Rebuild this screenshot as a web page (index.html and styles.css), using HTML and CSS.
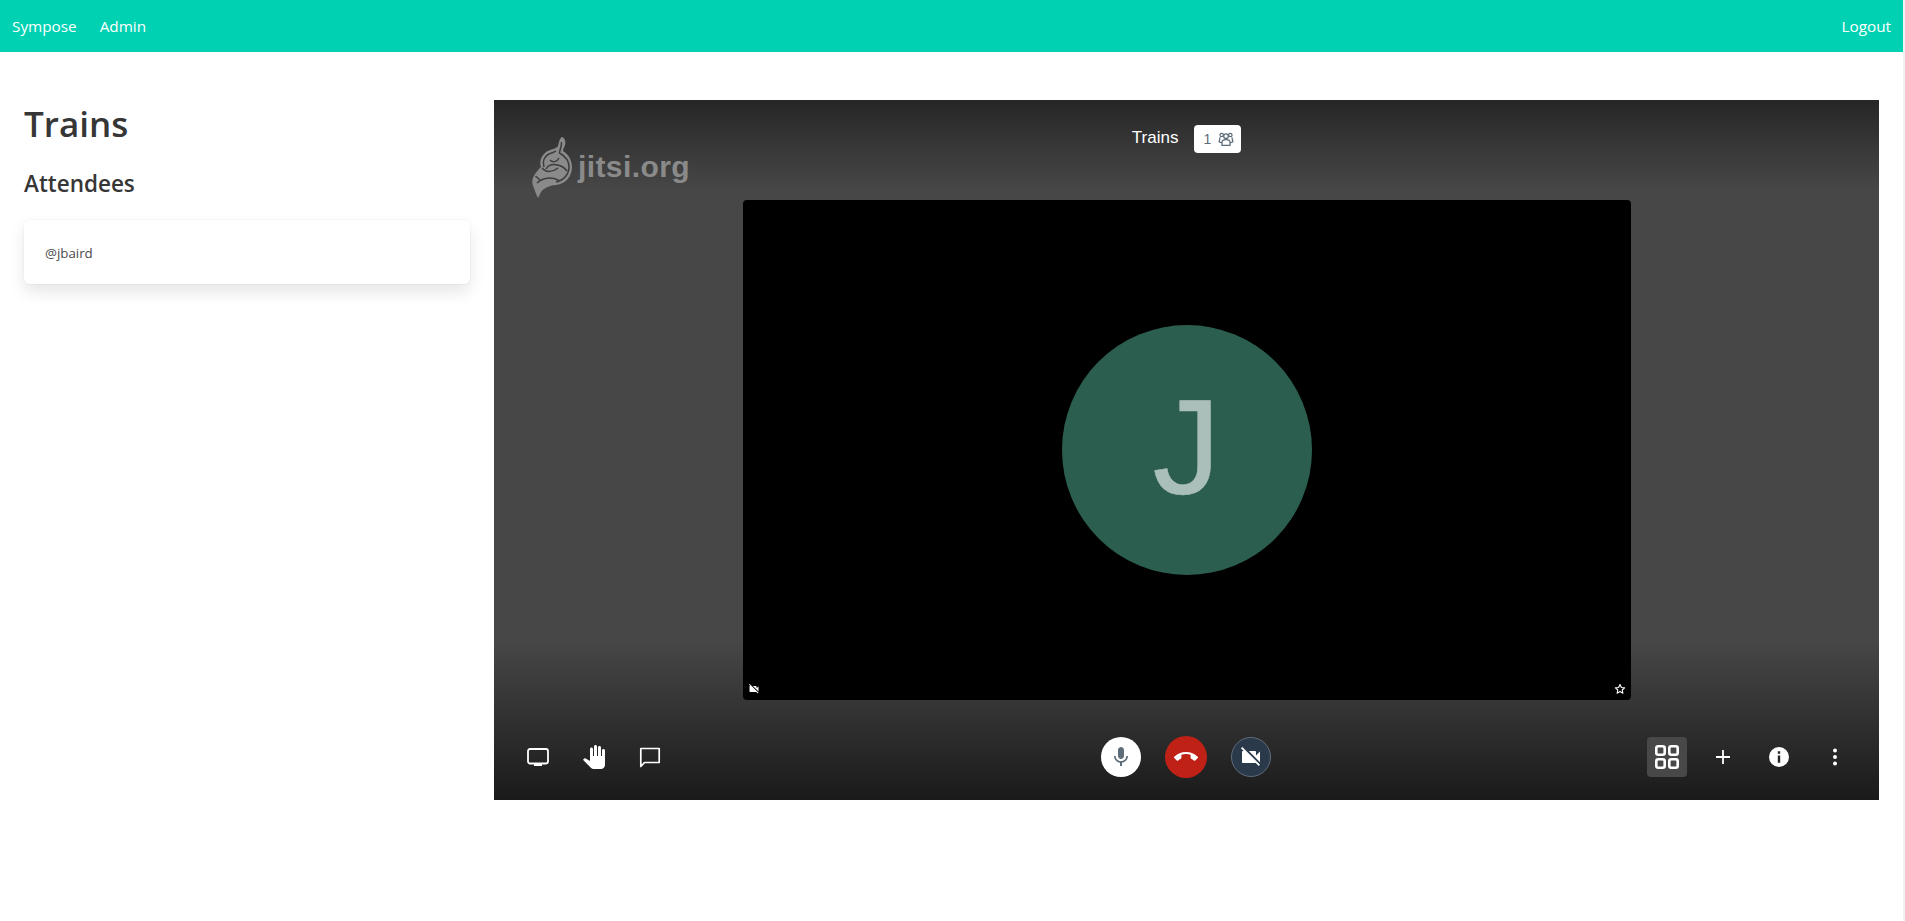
FILE: index.html
```html
<!DOCTYPE html>
<html>
<head>
    <meta charset="UTF-8">
    <meta name="viewport" content="width=device-width, initial-scale=1.0">
    <title>Trains</title>
    <link rel="stylesheet" href="styles.css">
</head>
<body>
    <nav class="navbar">
        <a href="#">Sympose</a>
        <a href="#">Admin</a>
        <a href="#" class="logout">Logout</a>
    </nav>
    <main class="columns">
        <section class="sidebar">
            <h1 class="title">Trains</h1>
            <h2 class="subtitle">Attendees</h2>
            <div class="card">@jbaird</div>
        </section>
        <section class="meeting">
            <div class="watermark">
                <svg class="watermark-logo" width="40" height="62" viewBox="0 0 40 62">
                    <path d="M30 1C33 2 34 6 33 9C32 12 31 13 31 15C36 18 40 24 40 31C40 40 34 48 24 49C17 49.500 12 52 9 56L6 62C4 58 3 55 2 52C0 48 -1 44 3 38C5 35 7 33 9 31C7 26 9 20 14 16C19 13 24 13 26 10C27 7 27 3 30 1Z" fill="#8a8a8a"/>
                    <path d="M29.500 6C30 10 27.500 14 27.500 17C33 20 37 25 37 31C37 38 32 44.500 24 46M12 31C10.500 26 12 21 16 18.500C19 17 22 16.500 24 15M14 33C18 26 30 28 35 35M10 32C14 37 21 36 26 32M5 47C11 41 20 41 27 44.500M8 44L3.500 40M18 24C21 27 25 26 27 22" fill="none" stroke="#3d3d3d" stroke-width="1.500"/>
                </svg>
                <span>jitsi.org</span>
            </div>
            <header class="meeting-head">
                <span class="meeting-name">Trains</span>
                <span class="count">
                    1
                    <svg width="16" height="16" viewBox="0 0 14 14" fill="none" stroke="#5e6d7a" stroke-width="1.100">
                        <circle cx="7" cy="4.500" r="2"/>
                        <circle cx="3.200" cy="3.500" r="1.500"/>
                        <circle cx="10.800" cy="3.500" r="1.500"/>
                        <path d="M3.500 12.500V9.500C3.500 8 5 7.500 7 7.500S10.500 8 10.500 9.500V12.500ZM1.800 5.500L1 9.500L3.500 10.500M12.200 5.500L13 9.500L10.500 10.500"/>
                    </svg>
                </span>
            </header>
            <div class="stage">
                <div class="tile">
                    <div class="avatar">J</div>
                    <div class="tile-status">
                        <svg width="12" height="12" viewBox="0 0 24 24" fill="#fff"><path d="M21 6.500l-4 4V7c0-.55-.45-1-1-1H9.820L21 17.180V6.500zM3.270 2L2 3.270 4.730 6H4c-.55 0-1 .45-1 1v10c0 .55.45 1 1 1h12c.21 0 .39-.08.54-.18L19.730 21 21 19.730 3.270 2z"/></svg>
                        <svg width="12" height="12" viewBox="0 0 24 24" fill="none" stroke="#fff" stroke-width="2.200" stroke-linejoin="round"><path d="M12 3l2.800 6 6.400.7-4.800 4.300 1.400 6.500L12 17.200 6.200 20.500l1.400-6.500-4.800-4.300 6.400-.7z"/></svg>
                    </div>
                </div>
            </div>
            <footer class="toolbar">
                <div class="tools">
                    <button class="tool">
                        <svg width="24" height="24" viewBox="0 0 24 24"><rect x="2" y="4" width="20" height="14.500" rx="2" fill="none" stroke="#fff" stroke-width="1.800"/><rect x="8" y="19" width="8" height="2" fill="#fff"/></svg>
                    </button>
                    <button class="tool">
                        <svg width="24" height="24" viewBox="0 0 24 24" fill="#fff"><path d="M23 5.500V20c0 2.200-1.800 4-4 4h-7.300c-1.080 0-2.100-.43-2.850-1.190L1 14.830s1.260-1.230 1.300-1.250c.22-.19.49-.29.79-.29.22 0 .42.06.6.16.04.01 4.310 2.460 4.310 2.460V4c0-.83.67-1.500 1.500-1.500S11 3.170 11 4v7h1V1.500c0-.83.67-1.500 1.500-1.500S15 .67 15 1.500V11h1V2.500c0-.83.67-1.500 1.500-1.500s1.500.67 1.500 1.500V11h1V5.500c0-.83.67-1.500 1.500-1.500s1.500.67 1.500 1.500z"/></svg>
                    </button>
                    <button class="tool">
                        <svg width="24" height="24" viewBox="0 0 24 24"><path d="M2.800 3.500H21.200V17.500H6.500L2.800 21.500Z" fill="none" stroke="#fff" stroke-width="1.700" stroke-linejoin="round"/></svg>
                    </button>
                </div>
                <div class="calls">
                    <button class="call call-mic">
                        <svg width="24" height="24" viewBox="0 0 24 24" fill="#5e6d7a"><path d="M12 14c1.660 0 2.990-1.340 2.990-3L15 5c0-1.660-1.340-3-3-3S9 3.340 9 5v6c0 1.660 1.340 3 3 3zm5.300-3c0 3-2.540 5.100-5.300 5.100S6.700 14 6.700 11H5c0 3.410 2.720 6.230 6 6.720V21h2v-3.280c3.280-.48 6-3.300 6-6.720h-1.700z"/></svg>
                    </button>
                    <button class="call call-end">
                        <svg width="24" height="24" viewBox="0 0 24 24" fill="#fff"><path d="M12 9c-1.600 0-3.150.25-4.600.72v3.100c0 .39-.23.74-.56.9-.98.49-1.870 1.120-2.660 1.850-.18.18-.43.28-.7.28-.28 0-.53-.11-.71-.29L.29 13.080c-.18-.17-.29-.42-.29-.7 0-.28.11-.53.29-.71C3.340 8.780 7.460 7 12 7s8.660 1.780 11.710 4.670c.18.18.29.43.29.71 0 .28-.11.53-.29.71l-2.480 2.480c-.18.18-.43.29-.71.29-.27 0-.52-.11-.7-.28-.79-.74-1.690-1.360-2.670-1.850-.33-.16-.56-.51-.56-.9v-3.100C15.150 9.250 13.600 9 12 9z"/></svg>
                    </button>
                    <button class="call call-video">
                        <svg width="24" height="24" viewBox="0 0 24 24" fill="#fff"><path d="M21 6.500l-4 4V7c0-.55-.45-1-1-1H9.820L21 17.180V6.500zM3.270 2L2 3.270 4.730 6H4c-.55 0-1 .45-1 1v10c0 .55.45 1 1 1h12c.21 0 .39-.08.54-.18L19.730 21 21 19.730 3.270 2z"/></svg>
                    </button>
                </div>
                <div class="tools tools-right">
                    <button class="tool tool-active">
                        <svg width="24" height="24" viewBox="0 0 24 24" fill="none" stroke="#fff" stroke-width="2.600"><rect x="1.300" y="1.300" width="8.400" height="8.400" rx="2"/><rect x="14.300" y="1.300" width="8.400" height="8.400" rx="2"/><rect x="1.300" y="14.300" width="8.400" height="8.400" rx="2"/><rect x="14.300" y="14.300" width="8.400" height="8.400" rx="2"/></svg>
                    </button>
                    <button class="tool">
                        <svg width="24" height="24" viewBox="0 0 24 24" fill="none" stroke="#fff" stroke-width="1.800"><path d="M12 5V19M5 12H19"/></svg>
                    </button>
                    <button class="tool">
                        <svg width="24" height="24" viewBox="0 0 24 24" fill="#fff"><path fill-rule="evenodd" d="M12 2a10 10 0 1 0 0 20a10 10 0 1 0 0-20ZM10.800 6.300h2.400v2.400h-2.400ZM10.800 10.500h2.400v7.200h-2.400Z"/></svg>
                    </button>
                    <button class="tool">
                        <svg width="24" height="24" viewBox="0 0 24 24" fill="#fff"><circle cx="12" cy="5.500" r="2"/><circle cx="12" cy="12" r="2"/><circle cx="12" cy="18.500" r="2"/></svg>
                    </button>
                </div>
            </footer>
        </section>
    </main>
</body>
</html>
```

FILE: styles.css
```css
html {
    background-color: #f1f1f1;
}

body {
    font-family: 'Open Sans', 'Noto Sans', sans-serif;
    margin: 0 2px 0 0;
    min-height: 100vh;
    background-color: #fff;
    color: #363636;
}

.navbar {
    display: flex;
    align-items: center;
    gap: 23px;
    height: 52px;
    padding: 0 12px;
    background-color: #00d1b2;
}

.navbar a {
    color: #fff;
    text-decoration: none;
    font-size: 15.3px;
}

.navbar .logout {
    margin-left: auto;
}

.columns {
    display: grid;
    grid-template-columns: 446px 1fr;
    gap: 24px;
    padding: 48px 24px 0;
}

.title {
    margin: 0;
    font-size: 35px;
    line-height: 48px;
    font-weight: 600;
}

.subtitle {
    margin: 20px 0 0;
    font-size: 22.5px;
    line-height: 32px;
    font-weight: 600;
}

.card {
    margin-top: 20px;
    height: 64px;
    padding: 2px 21px 0;
    box-sizing: border-box;
    display: flex;
    align-items: center;
    font-size: 13.3px;
    color: #4a4a4a;
    background-color: #fff;
    border-radius: 6px;
    box-shadow: 0 8px 16px rgba(10, 10, 10, 0.1), 0 0 0 1px rgba(10, 10, 10, 0.02);
}

.meeting {
    position: relative;
    height: 700px;
    display: flex;
    flex-direction: column;
    font-family: 'Liberation Sans', Arial, sans-serif;
    background: linear-gradient(to bottom, #262626 0, #474747 90px, #474747 540px, #1a1a1a 700px);
}

.watermark {
    position: absolute;
    top: 36px;
    left: 38px;
    display: flex;
    align-items: center;
    gap: 6px;
    color: #8a8a8a;
    font-size: 30px;
    letter-spacing: 0.4px;
    font-weight: 700;
}

.meeting-head {
    height: 100px;
    display: flex;
    align-items: flex-start;
    justify-content: center;
    gap: 16px;
    padding-top: 25px;
    box-sizing: border-box;
}

.meeting-name {
    color: #fff;
    font-size: 17px;
    line-height: 26px;
}

.count {
    display: flex;
    align-items: center;
    gap: 7px;
    height: 28px;
    padding: 0 7px 0 9px;
    color: #5e6d7a;
    font-size: 14px;
    background-color: #fff;
    border-radius: 4px;
}

.stage {
    display: flex;
    justify-content: center;
}

.tile {
    position: relative;
    width: 888px;
    height: 500px;
    display: flex;
    align-items: center;
    justify-content: center;
    background-color: #000;
    border-radius: 4px;
}

.avatar {
    width: 250px;
    height: 250px;
    padding-bottom: 6px;
    box-sizing: border-box;
    display: flex;
    align-items: center;
    justify-content: center;
    border-radius: 50%;
    background-color: #2b5e4f;
    color: #aabfb9;
    font-size: 136px;
    -webkit-text-stroke: 0.6px #aabfb9;
}

.tile-status {
    position: absolute;
    left: 5px;
    right: 5px;
    bottom: 5px;
    display: flex;
    justify-content: space-between;
}

.tile-status svg {
    display: block;
}

.toolbar {
    flex: 1;
    display: grid;
    grid-template-columns: 1fr auto 1fr;
    align-items: center;
    padding: 14px 16px 0;
}

.tools {
    display: flex;
}

.tools-right {
    justify-content: flex-end;
}

.tool {
    width: 56px;
    height: 40px;
    padding: 0;
    border: 0;
    background: none;
    display: flex;
    align-items: center;
    justify-content: center;
}

.tool-active {
    position: relative;
}

.tool-active::before {
    content: '';
    position: absolute;
    left: 8px;
    top: 0;
    width: 40px;
    height: 40px;
    border-radius: 4px;
    background-color: #484848;
}

.tool-active svg {
    position: relative;
}

.calls {
    display: flex;
    align-items: center;
    gap: 24px;
    margin-left: -1px;
}

.call {
    width: 40px;
    height: 40px;
    padding: 0;
    border: 0;
    border-radius: 50%;
    display: flex;
    align-items: center;
    justify-content: center;
}

.call-mic {
    background-color: #fff;
}

.call-end {
    width: 42px;
    height: 42px;
    background-color: #bf2117;
}

.call-video {
    box-sizing: border-box;
    background-color: #2a3a4b;
    border: 1px solid #5e6d7a;
}
```
